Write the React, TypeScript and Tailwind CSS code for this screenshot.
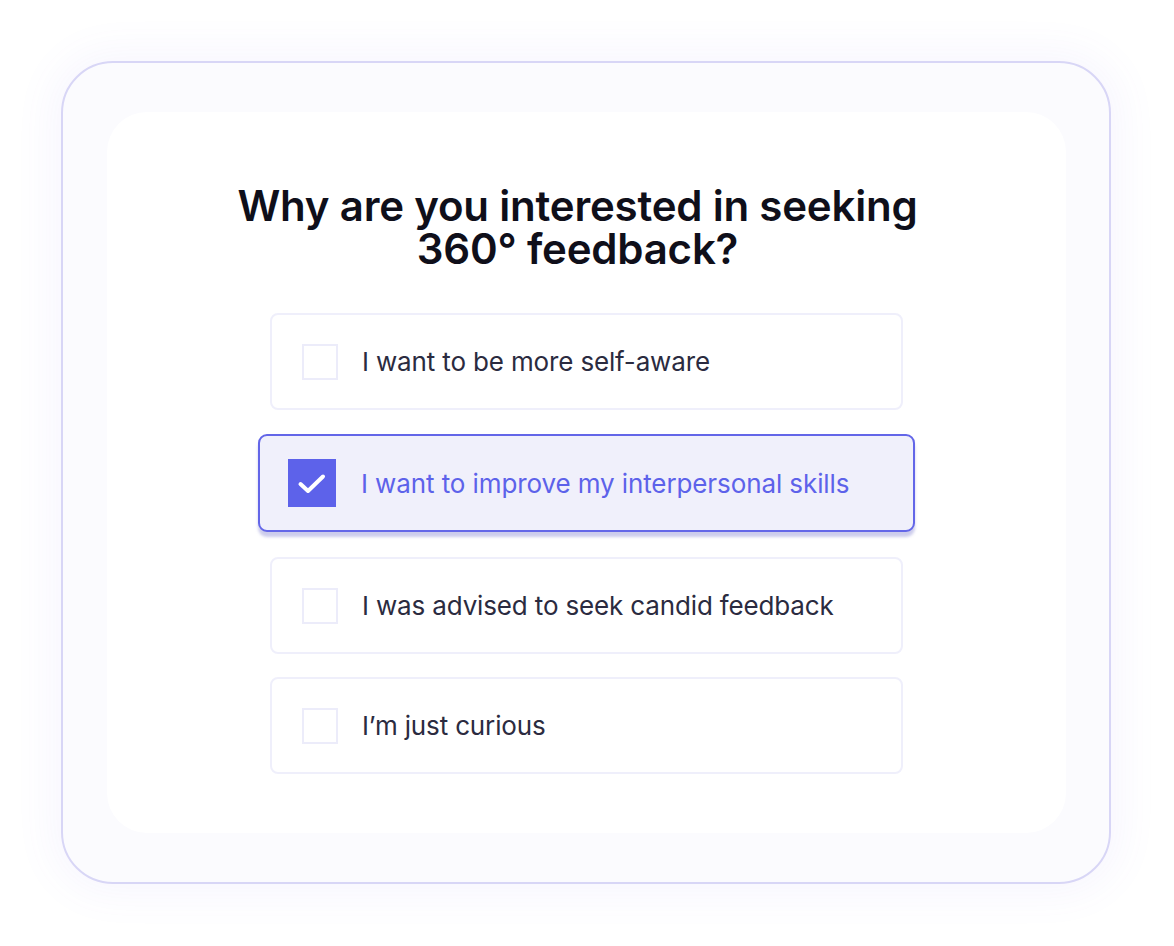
import React from "react";

const options = [
  { label: "I want to be more self-aware", checked: false },
  { label: "I want to improve my interpersonal skills", checked: true },
  { label: "I was advised to seek candid feedback", checked: false },
  { label: "I\u2019m just curious", checked: false },
];

export default function App() {
  return (
    <div
      className="w-[1174px] h-[946px] bg-white flex items-start justify-start"
      style={{ fontFamily: "Inter, 'Noto Sans', sans-serif" }}
    >
      <div className="ml-[61px] mt-[61px] w-[1050px] h-[823px] rounded-[52px] border-2 border-[#d8d6f6] bg-[#fbfbfe] shadow-[0_0_40px_10px_rgba(120,110,230,0.06)] pt-[49px] pl-[44px]">
        <div className="w-[959px] h-[721px] rounded-[40px] bg-white pt-[72px] flex flex-col items-center">
          <h1 className="mr-[18px] text-[42px] leading-[43px] font-semibold text-[#0f0f1a] text-center tracking-[-0.2px]">
            Why are you interested in seeking
            <br />
            360° feedback?
          </h1>
          <div className="mt-[43px] flex flex-col items-center gap-[23px]">
            {options.map((o) =>
              o.checked ? (
                <div
                  key={o.label}
                  className="mt-[1px] mb-[2px] w-[657px] h-[98px] rounded-[9px] border-2 border-[#6366e8] bg-[#f0f0fb] flex items-center pl-[28px] gap-[25px] shadow-[0_5px_3px_0_rgba(110,110,200,0.35)]"
                >
                  <div className="w-[48px] h-[48px] shrink-0 bg-[#5d62ea] flex items-center justify-center">
                    <svg width="48" height="48" viewBox="0 0 48 48" fill="none">
                      <path d="M12.5 25l7.5 7 15-14.5" stroke="white" strokeWidth="4" strokeLinecap="round" strokeLinejoin="round" />
                    </svg>
                  </div>
                  <span className="text-[26px] text-[#5d62ea] tracking-[-0.1px]">{o.label}</span>
                </div>
              ) : (
                <div
                  key={o.label}
                  className="w-[633px] h-[97px] rounded-[8px] border-2 border-[#efeffb] bg-white flex items-center pl-[30px] gap-[24px]"
                >
                  <div className="w-[36px] h-[36px] shrink-0 border-2 border-[#ececfa]" />
                  <span className="text-[26px] text-[#2b2b40] tracking-[-0.15px]">{o.label}</span>
                </div>
              )
            )}
          </div>
        </div>
      </div>
    </div>
  );
}
